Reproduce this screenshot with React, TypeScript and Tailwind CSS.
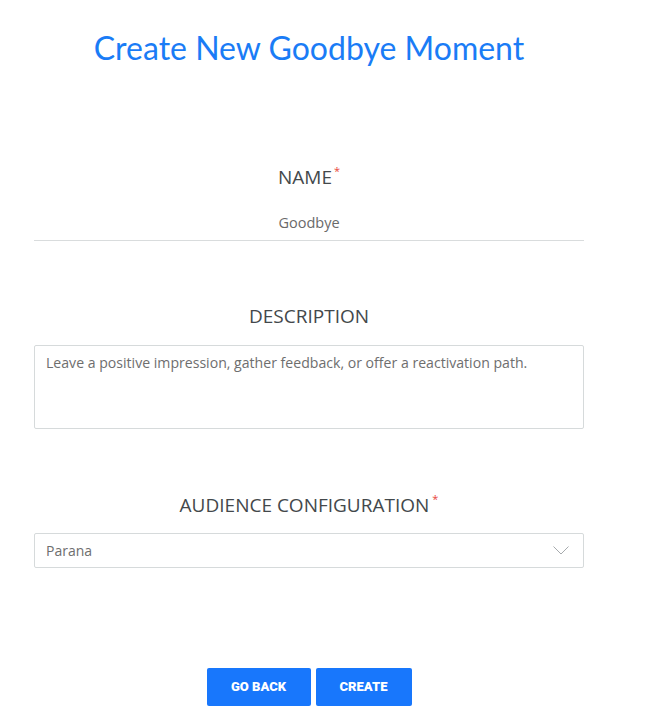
import React from "react";

export default function App() {
  return (
    <div className="w-[650px] h-[724px] bg-white">
      <div className="w-[550px] ml-[34px] flex flex-col items-center font-['Open_Sans',sans-serif]">
        <h1 className="mt-[28px] text-[32px] leading-[40px] text-[#1a7cf6] font-['Lato',sans-serif]">
          Create New Goodbye Moment
        </h1>
        <div className="mt-[96px] text-[19px] leading-[26px] text-[#43484b] flex">
          NAME<span className="text-[#e8463a] text-[11px] leading-[14px] ml-[2px]">*</span>
        </div>
        <div className="mt-[23px] w-full border-b border-[#d9dcdd] pb-[7px] text-center text-[14.5px] leading-[20px] text-[#6a6a6a]">
          Goodbye
        </div>
        <div className="mt-[62px] text-[19px] leading-[26px] text-[#43484b]">DESCRIPTION</div>
        <div className="mt-[16px] w-full h-[84px] border border-[#d6dadb] rounded-[2px] px-[11px] py-[7px] text-[14.1px] leading-[20px] text-[#6e6e6e]">
          Leave a positive impression, gather feedback, or offer a reactivation path.
        </div>
        <div className="mt-[63px] text-[19px] leading-[26px] text-[#43484b] flex">
          AUDIENCE CONFIGURATION<span className="text-[#e8463a] text-[11px] leading-[14px] ml-[3px]">*</span>
        </div>
        <div className="mt-[15px] w-full h-[35px] border border-[#d6dadb] rounded-[2px] pl-[11px] pr-[14px] flex items-center justify-between text-[14px] text-[#6e6e6e]">
          <span>Parana</span>
          <svg width="16" height="9" viewBox="0 0 16 9" fill="none" stroke="#a6aaad" strokeWidth="1">
            <path d="M0.5 0.5 L8 8 L15.5 0.5" />
          </svg>
        </div>
        <div className="mt-[100px] flex gap-[5px] font-['Roboto',sans-serif]">
          <button className="w-[104px] h-[38px] bg-[#1877fc] rounded-[2px] text-white text-[13px] font-black">GO BACK</button>
          <button className="w-[96px] h-[38px] bg-[#1877fc] rounded-[2px] text-white text-[13px] font-black">CREATE</button>
        </div>
      </div>
    </div>
  );
}
